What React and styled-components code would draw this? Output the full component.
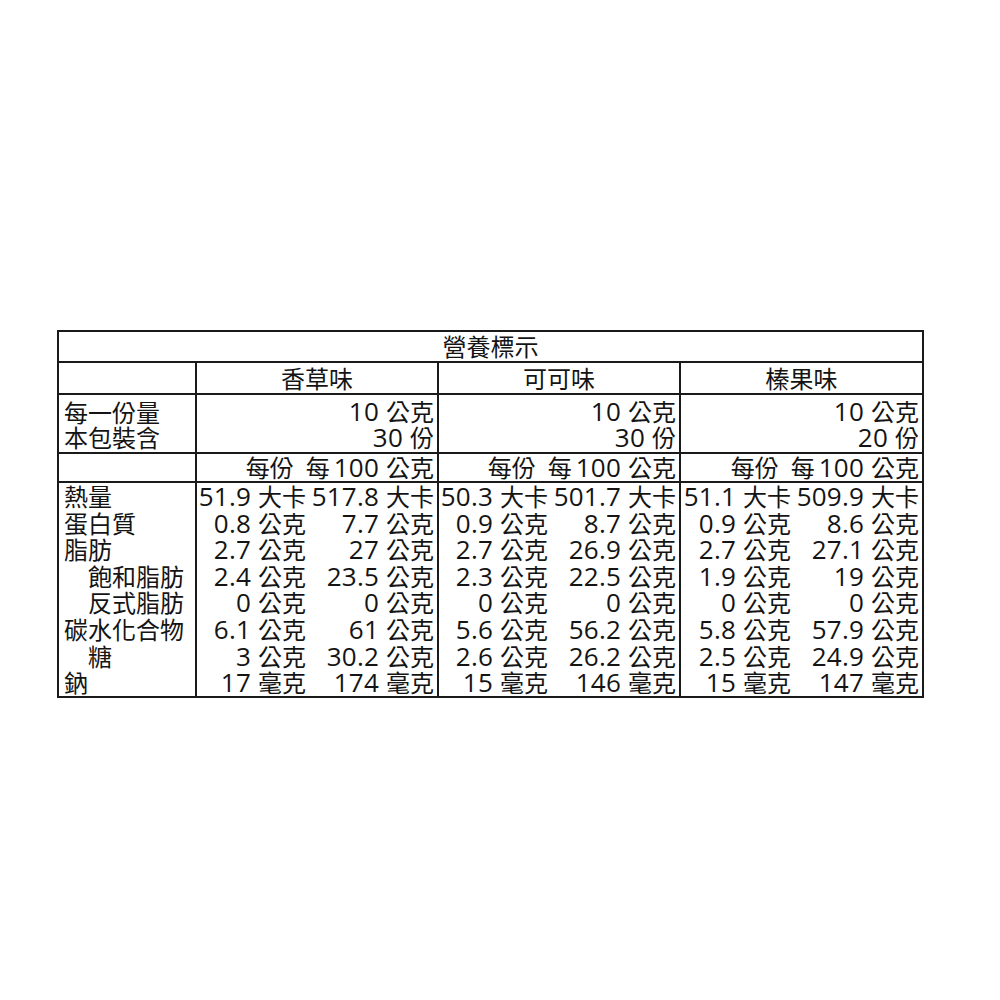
import React from "react";
import styled, { createGlobalStyle } from "styled-components";

const Global = createGlobalStyle`
  html, body { margin: 0; padding: 0; background: #fff; }
  body { font-family: "Noto Sans CJK TC", "Noto Sans CJK SC", "Noto Sans", sans-serif; color: #141414; }
`;

const Page = styled.div`
  width: 1000px;
  height: 1000px;
  padding: 330px 0 0 57px;
  box-sizing: border-box;
`;

const Table = styled.table`
  border-collapse: collapse;
  table-layout: fixed;
  width: 865px;
  border: 2px solid #1a1a1a;
  font-size: 24px;
  line-height: 26.6px;
  font-weight: 400;
`;

const Cell = styled.td`
  padding: 0 ${(p) => p.$pr ?? 0}px 0 ${(p) => p.$pl ?? 0}px;
  text-align: ${(p) => p.$align || "left"};
  vertical-align: middle;
  white-space: nowrap;
  overflow: visible;
  border-right: ${(p) => (p.$right ? "2px solid #1a1a1a" : "none")};
`;

const SectionRow = styled.tr`
  height: ${(p) => p.$h}px;
  & > td { border-top: 2px solid #1a1a1a; }
`;

const DataRow = styled.tr`
  height: 26.6px;
  &:first-child > td { border-top: 2px solid #1a1a1a; }
`;

const Label = styled(Cell)`
  padding-left: ${(p) => (p.$indent ? 29 : 5)}px;
  border-right: 2px solid #1a1a1a;
`;

const Lines = styled.div`
  display: flex;
  flex-direction: column;
  line-height: 25px;
`;

const Num = styled.span`
  font-family: "Open Sans", "Noto Sans", sans-serif;
  font-size: 26px;
  font-weight: 500;
  letter-spacing: 0.2px;
`;

const Gap = styled.span`
  display: inline-block;
  width: ${(p) => p.$w}px;
`;

function Value({ text }) {
  const [n, u] = text.split(" ");
  return (
    <>
      <Num>{n}</Num>
      <Gap $w={7} />
      {u}
    </>
  );
}

const flavors = ["香草味", "可可味", "榛果味"];
const servings = [
  ["10 公克", "30 份"],
  ["10 公克", "30 份"],
  ["10 公克", "20 份"],
];

const rows = [
  { name: "熱量", v: [["51.9 大卡", "517.8 大卡"], ["50.3 大卡", "501.7 大卡"], ["51.1 大卡", "509.9 大卡"]] },
  { name: "蛋白質", v: [["0.8 公克", "7.7 公克"], ["0.9 公克", "8.7 公克"], ["0.9 公克", "8.6 公克"]] },
  { name: "脂肪", v: [["2.7 公克", "27 公克"], ["2.7 公克", "26.9 公克"], ["2.7 公克", "27.1 公克"]] },
  { name: "飽和脂肪", indent: true, v: [["2.4 公克", "23.5 公克"], ["2.3 公克", "22.5 公克"], ["1.9 公克", "19 公克"]] },
  { name: "反式脂肪", indent: true, v: [["0 公克", "0 公克"], ["0 公克", "0 公克"], ["0 公克", "0 公克"]] },
  { name: "碳水化合物", v: [["6.1 公克", "61 公克"], ["5.6 公克", "56.2 公克"], ["5.8 公克", "57.9 公克"]] },
  { name: "糖", indent: true, v: [["3 公克", "30.2 公克"], ["2.6 公克", "26.2 公克"], ["2.5 公克", "24.9 公克"]] },
  { name: "鈉", v: [["17 毫克", "174 毫克"], ["15 毫克", "146 毫克"], ["15 毫克", "147 毫克"]] },
];

export default function App() {
  return (
    <Page>
      <Global />
      <Table>
        <colgroup>
          <col style={{ width: 138 }} />
          <col style={{ width: 110 }} />
          <col style={{ width: 132 }} />
          <col style={{ width: 110 }} />
          <col style={{ width: 132 }} />
          <col style={{ width: 111 }} />
          <col style={{ width: 132 }} />
        </colgroup>
        <tbody>
          <SectionRow $h={31}>
            <Cell colSpan={7} $align="center">營養標示</Cell>
          </SectionRow>
          <SectionRow $h={32}>
            <Label />
            {flavors.map((f) => (
              <Cell key={f} colSpan={2} $align="center" $right>{f}</Cell>
            ))}
          </SectionRow>
          <SectionRow $h={59}>
            <Label>
              <Lines>
                <span>每一份量</span>
                <span>本包裝含</span>
              </Lines>
            </Label>
            {servings.map((s, i) => (
              <Cell key={i} colSpan={2} $align="right" $pr={3} $right>
                <Lines>
                  <span><Value text={s[0]} /></span>
                  <span><Value text={s[1]} /></span>
                </Lines>
              </Cell>
            ))}
          </SectionRow>
          <SectionRow $h={29}>
            <Label />
            {flavors.map((f) => (
              <Cell key={f} colSpan={2} $align="right" $pr={3} $right>
                每份<Gap $w={12} />每<Gap $w={4} /><Value text="100 公克" />
              </Cell>
            ))}
          </SectionRow>
        </tbody>
        <tbody>
          {rows.map((r) => (
            <DataRow key={r.name}>
              <Label $indent={r.indent}>{r.name}</Label>
              {r.v.map((pair, i) => (
                <React.Fragment key={i}>
                  <Cell $align="right"><Value text={pair[0]} /></Cell>
                  <Cell $align="right" $pr={3} $right><Value text={pair[1]} /></Cell>
                </React.Fragment>
              ))}
            </DataRow>
          ))}
        </tbody>
      </Table>
    </Page>
  );
}
